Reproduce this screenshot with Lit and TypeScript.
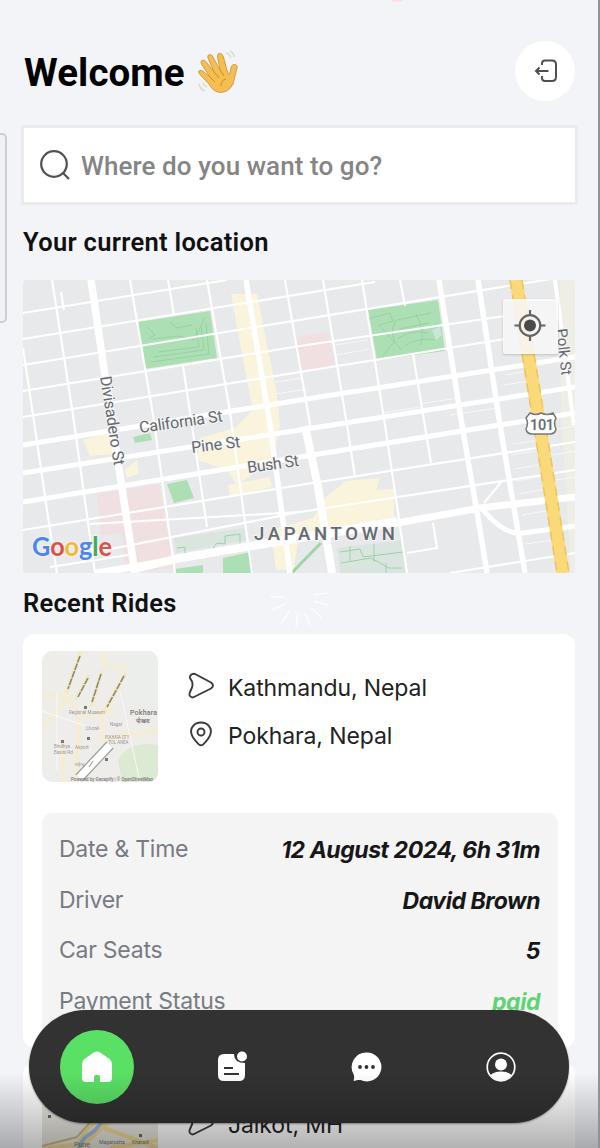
import { LitElement, html, css, svg } from "lit";
import { customElement, property } from "lit/decorators.js";

const minorRoads = [
  "M23 348L33 415L50 530L57 573", "M52 280L73 415L95 573", "M130 280L153 415L175 573",
  "M168 280L174 315M183 366L190 412L207 527", "M207 280L230 412L252 573",
  "M285 280L311 430", "M323 280L347 425L355 477", "M362 280L385 425L407 573",
  "M400 280L405 306M413 354L431 463", "M23 313L227 280", "M23 339L375 282",
  "M23 365L551 279", "M23 391L300 346L505 316", "M23 417L300 372L505 339",
  "M23 530L300 485L575 442", "M90 524L300 512L575 470", "M85 554L300 512",
  "M50 567L128 555", "M407 553L437 548L433 523", "M450 573L575 553",
  "M503 480L484 503", "M61 292L64 310",
];
const faintRoads = [
  "M335 345L368 340M336 355L370 349", "M450 415L498 408M505 375L532 370",
  "M504 385L535 380M506 398L538 393", "M512 444L540 440M512 455L542 450",
  "M515 469L544 464M516 481L546 476", "M518 494L547 489M522 515L550 510",
  "M525 544L553 540M551 430L575 426", "M553 455L575 451M555 480L575 477",
  "M420 404L458 398M382 413L420 407", "M268 395L307 389M269 383L302 378",
];

@customElement("city-map")
class CityMap extends LitElement {
  static styles = css`
    :host { display: block; }
    svg { display: block; width: 552px; height: 293px; border-radius: 4px; }
    text { font-family: Roboto, sans-serif; fill: #66696d; stroke: #f4f5f6; stroke-width: 2px; paint-order: stroke; stroke-linejoin: round; }
    .brand { font-family: Lato, sans-serif; font-weight: 700; stroke: #f2f3f5; }
    .blue { fill: #4d86ef; }
    .red { fill: #dd5147; }
    .yellow { fill: #f0bb32; }
    .green { fill: #43a95d; }
  `;
  render() {
    return html`<svg viewBox="23 280 552 293" aria-label="Map">
      <rect x="23" y="280" width="552" height="293" fill="#e8e9eb" />
      <g fill="#f9f4db">
        <path d="M231 294h26l20 100 3 32-8 34-35 25-10-15-30-10 3-22 35-10 18-18-10-50z" />
        <path d="M83 440l26-8 6 22-25 2zM125 470l12-10 2 13-12 5zM228 485l42-8 2 10-42 10zM326 497l20-16 34-3-4 12 18-1v28l-95 17-5 36h-18l-5-40 42-12z" />
        <path d="M560 280h15v293h-4l-10-160z" opacity=".45" />
      </g>
      <g fill="#f1e0e2"><path d="M296 337l32-5 7 35-33 5zM97 494l62-10 15 84-48 5-4-40-21 3z" /></g>
      <g fill="#addfb5">
        <path d="M138 322l72-11 7 47-73 11zM368 310l70-10 7 51-68 9zM167 484l20-4 7 18-20 5zM223 558l27-6 3 21h-30zM175 569l28-4v8h-28zM133 437l17-4 2 7-17 3z" />
      </g>
      <g fill="#dbe5df"><path d="M174 538l70-10 3 12-71 13zM337 548l66-8 3 33h-66z" /></g>
      <g fill="none" stroke="#94cfa3" stroke-width=".9">
        <path d="M147 327l8 8-7 4M153 339l25-3 16 4 11-23M151 362l58-8-3-31M154 357l50-7-3-24M158 352l41-5-3-19M170 322l7 6 15-3M368 319l22-6 3 8-14 4 15 17-11 14M397 320l34-7M399 329l30-6M397 339q14-10 31-6M405 346q12-9 30-6M396 320q-10 16 6 30M416 314q9 16 5 31" />
        <path d="M340 552l20-3 3 8 40-5M341 563l30-5 18 10h13M350 546v15M374 544v18M386 563v10M177 548l8-1v7M213 548l4-5 8 1v-8l15-2v9" />
      </g>
      <path d="M432 330l8-3 2 8-6 5z" fill="#cbe6dd" />
      <path d="M321 543Q300 564 292 573" fill="none" stroke="#a0d5a8" stroke-width="3" />
      <g fill="none" stroke="#f6f7f8" stroke-width="1">${faintRoads.map((d) => svg`<path d=${d} />`)}</g>
      <g fill="none" stroke="#fff" stroke-width="2.1">${minorRoads.map((d) => svg`<path d=${d} />`)}</g>
      <g fill="none" stroke="#fff" stroke-width="5.5">
        <path d="M246 280L270 425L290 573" /><path d="M439 280L462 425L480 530L487 573" />
        <path d="M478 280L500 425L525 573" /><path d="M555 280L574 425" stroke-width="4" />
        <path d="M23 445L300 400L575 357M23 473L300 430L575 387M23 502L300 457L575 413" stroke-width="5" />
        <path d="M91 280L113 430L135 573" stroke-width="7.5" />
        <path d="M305 426L318 487L332 573" stroke-width="8" />
        <path d="M96 573L145 565L230 550L397 523L480 508L575 497" stroke-width="7" />
        <path d="M130 570L180 558L397 521" stroke-width="8" />
        <path d="M483 510Q505 536 523 533L575 526" stroke-width="5" />
      </g>
      <path d="M516 280L538 415L563 573" fill="none" stroke="#f9d978" stroke-width="13" />
      <path d="M510 280L532 415L557 573M522 280L544 415L569 573" fill="none" stroke="#e9c35b" stroke-width="1.4" stroke-dasharray="9 6" />
      <text font-size="16" transform="translate(100 377) rotate(81)" textLength="90">Divisadero St</text>
      <text font-size="16" transform="translate(140 433) rotate(-8)" textLength="84">California St</text>
      <text font-size="16" transform="translate(192 453) rotate(-7)" textLength="49">Pine St</text>
      <text font-size="16" transform="translate(248 473) rotate(-8)" textLength="52">Bush St</text>
      <text font-size="15" transform="translate(556.500 329) rotate(84)" textLength="47">Polk St</text>
      <text x="254" y="540" font-size="18.5" font-weight="500" textLength="141">JAPANTOWN</text>
      <path d="M530 413q6 3 11 0q6 3 12 0l3 5q-3 5 0 11q-1 5-6 5h-18q-5 0-6-5q3-6 0-11z" fill="#fff" stroke="#77787b" stroke-width="1.500" />
      <text x="530" y="430" font-size="14.5" font-weight="500" textLength="24">101</text>
      <text class="brand" x="32" y="556" font-size="26" textLength="80" lengthAdjust="spacingAndGlyphs"><tspan class="blue">G</tspan><tspan class="red">o</tspan><tspan class="yellow">o</tspan><tspan class="blue">g</tspan><tspan class="green">l</tspan><tspan class="red">e</tspan></text>
      <rect x="503" y="299" width="55" height="55" rx="2" fill="#fff" fill-opacity=".84" style="filter:drop-shadow(0 1px 1px #0003)" />
      <g fill="none" stroke="#656565" stroke-width="2.2"><circle cx="530" cy="325.500" r="10.300" /><path d="M530 310v6M530 335v6M514.500 325.500h6M539.500 325.500h6" /></g>
      <circle cx="530" cy="325.500" r="6" fill="#4b4b4b" />
    </svg>`;
  }
}

@customElement("ride-thumb")
class RideThumb extends LitElement {
  @property() place = "pokhara";
  static styles = css`
    :host { display: block; width: 116px; height: 131px; flex: none; }
    svg { display: block; width: 116px; height: 131px; border-radius: 10px; }
    text { font-family: Roboto, sans-serif; fill: #77777b; }
    .faint { opacity: .75; }
  `;
  render() {
    return this.place === "pokhara"
      ? html`<svg viewBox="0 0 116 131">
          <rect width="116" height="131" fill="#efede9" />
          <path d="M86 0h30v58q-18-14-32-4z" fill="#ebeeea" />
          <path d="M76 109q12-20 40-15v37H80z" fill="#dce9d3" />
          <path d="M0 43l26 3-24 30M26 46l12 20-5 65M22 131l-2-40M62 0v16h22M60 90l0-30M116 80l-34 3-22 8M40 65l33-6" fill="none" stroke="#f6ecd0" stroke-width="3.500" />
          <path d="M0 60l60 20M15 40v80M78 40l20 91" fill="none" stroke="#faf8f4" />
          <g fill="none" stroke="#f1e9c8" stroke-width="4"><path d="M39 0L24 42M47 24L34 48M60 20L49 56M84 22L62 60" /></g>
          <g fill="none" stroke="#8f886b" stroke-width="1.600" stroke-dasharray="7 1"><path d="M38 5L26 38M46 27L36 46M59 23L50 51M82 25L65 56" /></g>
          <path d="M68 94L37 127" stroke="#9aa19c" stroke-width="10" /><path d="M68 94L37 127" stroke="#fff" stroke-width="7.500" />
          <path d="M51 110l-4 6" stroke="#8b938e" />
          <text x="88" y="64" font-size="7" font-weight="500" textLength="27">Pokhara</text><text x="94" y="72" font-size="6" font-weight="700">पोखरा</text>
          <g class="faint" font-size="4.500"><text x="27" y="63">Regional Museum</text><text x="63" y="88" textLength="24" lengthAdjust="spacingAndGlyphs">POKHARA CITY</text><text x="66" y="93">TOL AREA</text><text x="33" y="98">Airport</text><text x="12" y="97">Bindhya</text><text x="12" y="103">Basini Rd</text><text x="33" y="115">महेन्द्र</text><text x="68" y="75">Nagar</text><text x="44" y="79">Chowk</text></g>
          <text x="29" y="129.500" font-size="4.500" font-weight="500" textLength="82" lengthAdjust="spacingAndGlyphs">Powered by Geoapify | © OpenStreetMap</text>
          <path d="M42 55h3v3h-3zM19 89h3v3h-3zM45 86h3v3h-3zM63 107h3v3h-3z" fill="#77777b" />
        </svg>`
      : html`<svg viewBox="0 0 116 131">
          <rect width="116" height="131" fill="#e9e6df" />
          <path d="M0 69L36 64 46 48 65 34M20 82L45 62 70 38M62 48L116 68M68 68L116 60" fill="none" stroke="#efd993" stroke-width="4" />
          <path d="M36 70Q40 58 48 54Q54 51 62 38" fill="none" stroke="#9ebbe0" stroke-width="4" />
          <path d="M0 66L35 57 52 38" fill="none" stroke="#cab987" stroke-width="2" />
          <text x="32" y="66.500" font-size="7">Pune</text><text x="57" y="64" font-size="5">Magarpatta</text><text x="90" y="64" font-size="5">Kharadi</text>
          <path d="M6 35h3v3h-3zM97 54h3v3h-3z" fill="#686868" />
        </svg>`;
  }
}

const sendIcon = html`<svg width="28" height="28" viewBox="0 0 28 28" fill="none" stroke="#3b3b3b" stroke-width="1.900" stroke-linejoin="round"><path d="M3.500 3.500Q6 .8 9 2.500L24 10.500Q28 13.500 24 16.500L8 24.500Q5 26.500 3 24Q2 22.500 3 20L5 15.500Q6 12.500 5 9.500L3 6Q2.500 5 3.500 3.500Z" /></svg>`;
const pinIcon = html`<svg width="28" height="28" viewBox="0 0 28 28" fill="none" stroke="#3b3b3b" stroke-width="1.900"><path d="M14 2.500C7 2.500 2.800 8.500 4.500 14C6 19 10 22.500 12 24.500Q14 26 16 24.500C18 22.500 22 19 23.500 14C25.200 8.500 21 2.500 14 2.500Z" /><circle cx="14" cy="12" r="3.500" /></svg>`;

@customElement("app-root")
class AppRoot extends LitElement {
  static styles = css`
    :host { display: block; position: relative; width: 600px; height: 1148px; overflow: hidden; background: #f3f4f8; font-family: Roboto, sans-serif; color: #111; }
    * { box-sizing: border-box; }
    main { padding: 41px 25px 0 23px; }
    header { display: flex; justify-content: space-between; align-items: center; height: 60px; }
    h1 { margin: 4px 0 0 1px; font-size: 38.500px; line-height: 50px; font-weight: 700; color: #000; display: flex; align-items: center; gap: 11px; letter-spacing: .1px; }
    .round { width: 60px; height: 60px; border-radius: 50%; background: #fff; display: grid; place-items: center; padding-left: 2px; }
    .search { margin: 27px 0 0 1px; height: 74px; background: #fff; outline: 3px solid #eaebee; display: flex; align-items: center; padding: 2px 0 0 14px; gap: 7px; color: #858585; font-size: 26px; font-weight: 500; letter-spacing: .08px; }
    h2 { margin: 0; font-size: 25.500px; line-height: 34px; font-weight: 600; letter-spacing: .3px; }
    .loc { margin-top: 23px; }
    city-map { margin-top: 21px; }
    .recent { margin-top: 13px; letter-spacing: .3px; }
    .card { margin-top: 14px; height: 414px; border-radius: 12px; background: #fff; padding: 17px 17px 17px 19px; font-family: Inter, sans-serif; }
    .trip { display: flex; }
    .places { margin: 19px 0 0 29px; display: flex; flex-direction: column; gap: 12px; }
    .place { display: flex; align-items: center; gap: 13px; height: 36px; font-size: 23px; color: #222; letter-spacing: -.1px; }
    .place svg { position: relative; top: -2px; }
    .details { margin-top: 31px; padding: 12px 18px 12px 17px; height: 235px; border-radius: 10px; background: #f4f4f4; }
    .row { display: flex; justify-content: space-between; align-items: center; height: 50.500px; font-size: 23px; color: #777b82; letter-spacing: -.25px; padding-bottom: 2px; }
    .value { color: #171717; font-style: italic; font-weight: 700; letter-spacing: -.45px; padding-top: 2px; }
    .row .paid { color: #5fd477; }
    .second { margin-top: 15px; }
    .second .places { margin-top: 27px; }
    nav { position: absolute; left: 29px; top: 1010px; width: 540px; height: 113px; border-radius: 57px; background: #323232; display: flex; justify-content: space-between; align-items: center; padding: 0 31px; box-shadow: 0 1px 2px #0006; }
    .tab { width: 74px; height: 74px; border-radius: 50%; display: grid; place-items: center; }
    .active { background: #5be066; }
    .shade { position: absolute; inset: 1072px 0 0 0; background: linear-gradient(#0000, #0000004d); }
    .edge { position: absolute; right: 0; top: 0; width: 2px; height: 1148px; background: #919295; }
    .side { position: absolute; left: -12px; top: 133px; width: 19px; height: 190px; border: 2px solid #ccced5; border-radius: 5px; background: #f0f2f7; }
    .spin { position: absolute; left: 268px; top: 566px; }
    .peek { position: absolute; left: 390px; top: -4px; width: 14px; height: 6px; border-radius: 50%; background: #fbe0e0; }
  `;
  render() {
    const row = (label: string, value: string, cls = "") =>
      html`<div class="row"><span>${label}</span><span class="value ${cls}">${value}</span></div>`;
    return html`
      <div class="side"></div><div class="peek"></div>
      <main>
        <header>
          <h1>Welcome
            <svg width="46" height="46" viewBox="0 0 46 46">
              <g fill="#f4be50" stroke="#c98b35" stroke-width=".8" stroke-linejoin="round">
                <path d="M13 34L3.500 24Q1.500 21 4 20.500Q6 20 8 22L14 27L5.500 14Q4 11 6.500 10Q9 9.500 11 13L18 22L12 8Q11 5 13.500 4.500Q16 4 17.500 8L24 20L21.500 6Q21.500 3 24 3.500Q26.500 3.500 27.500 7L32 24Q34 25 34.500 20Q35 14 39 14.500Q42.500 15.500 40.500 20L37 34Q33 42 25 42.500Q17 42 13 34Z" />
              </g>
              <path d="M14 27l5 5M18 22l5 6M24 20l4 6M30 29q-5 1-5 7" fill="none" stroke="#cf8b27" />
              <path d="M30 3q4 1 5 5M34 1q4 2 4 6M3 34q1 5 6 7M7 33q1 3 4 4" fill="none" stroke="#e0dacb" stroke-width="1.500" />
            </svg>
          </h1>
          <div class="round"><svg width="26" height="26" viewBox="0 0 26 26" fill="none" stroke="#505050" stroke-width="2"><path d="M9 7V5.500Q9 2.500 12 2.500H19Q23 2.500 23 6.500V19Q23 23 19 23H12Q9 23 9 20V18M15.500 13H4M6.500 9.500L3 13L6.500 16.500" /></svg></div>
        </header>
        <div class="search"><svg width="36" height="36" viewBox="0 0 36 36" fill="none" stroke="#505050" stroke-width="2.200"><circle cx="16" cy="16" r="12.800" /><path d="M25 25L31 31" /></svg><span>Where do you want to go?</span></div>
        <h2 class="loc">Your current location</h2>
        <city-map></city-map>
        <h2 class="recent">Recent Rides</h2>
        <section class="card">
          <div class="trip"><ride-thumb></ride-thumb><div class="places"><div class="place">${sendIcon}Kathmandu, Nepal</div><div class="place">${pinIcon}Pokhara, Nepal</div></div></div>
          <div class="details">${row("Date & Time", "12 August 2024, 6h 31m")}${row("Driver", "David Brown")}${row("Car Seats", "5")}${row("Payment Status", "paid", "paid")}</div>
        </section>
        <section class="card second"><div class="trip"><ride-thumb place="pune"></ride-thumb><div class="places"><div class="place">${sendIcon}Jaikot, MH</div></div></div></section>
      </main>
      <svg class="spin" width="62" height="62" viewBox="0 0 62 62" stroke="#fff" stroke-width="1.600"><path d="M2 31h14M4 44l13-6M13 57l9-12M28 61l2-14M42 60l-5-13M54 52l-11-10M60 39l-14-4M59 27l-13 2" opacity=".8" /></svg>
      <nav>
        <div class="tab active"><svg width="34" height="34" viewBox="0 0 34 34"><path d="M2 14Q2 11 4.500 9L14.500 2Q17 .8 19.500 2L29.500 9Q32 11 32 14V28Q32 32 28 32H20V27Q20 25 18 25H16Q14 25 14 27V32H6Q2 32 2 28Z" fill="#fff" /></svg></div>
        <div class="tab"><svg width="34" height="34" viewBox="0 0 34 34"><path d="M9 4H19Q19 13 30 13V25Q30 31 24 31H9Q3 31 3 25V10Q3 4 9 4Z" fill="#fff" /><circle cx="27" cy="6.500" r="5" fill="#fff" /><path d="M9 18h9M9 24h15" stroke="#323232" stroke-width="2" /></svg></div>
        <div class="tab"><svg width="34" height="34" viewBox="0 0 34 34"><path d="M17.500 2.500A14.500 14.500 0 1 1 11.500 30Q8 29.500 5.500 31Q4 31 5 29Q5.500 26.500 4.500 24A14.500 14.500 0 0 1 17.500 2.500Z" fill="#fff" /><g fill="#323232"><circle cx="11" cy="17" r="1.900" /><circle cx="17.500" cy="17" r="1.900" /><circle cx="24" cy="17" r="1.900" /></g></svg></div>
        <div class="tab"><svg width="34" height="34" viewBox="0 0 34 34"><circle cx="17" cy="17" r="13.800" fill="none" stroke="#fff" stroke-width="1.700" /><circle cx="17" cy="14.500" r="6" fill="#fff" /><path d="M6.500 25Q10 21.500 17 21.500T27.500 25Q23.500 31 17 31T6.500 25Z" fill="#fff" /></svg></div>
      </nav>
      <div class="shade"></div><div class="edge"></div>`;
  }
}
